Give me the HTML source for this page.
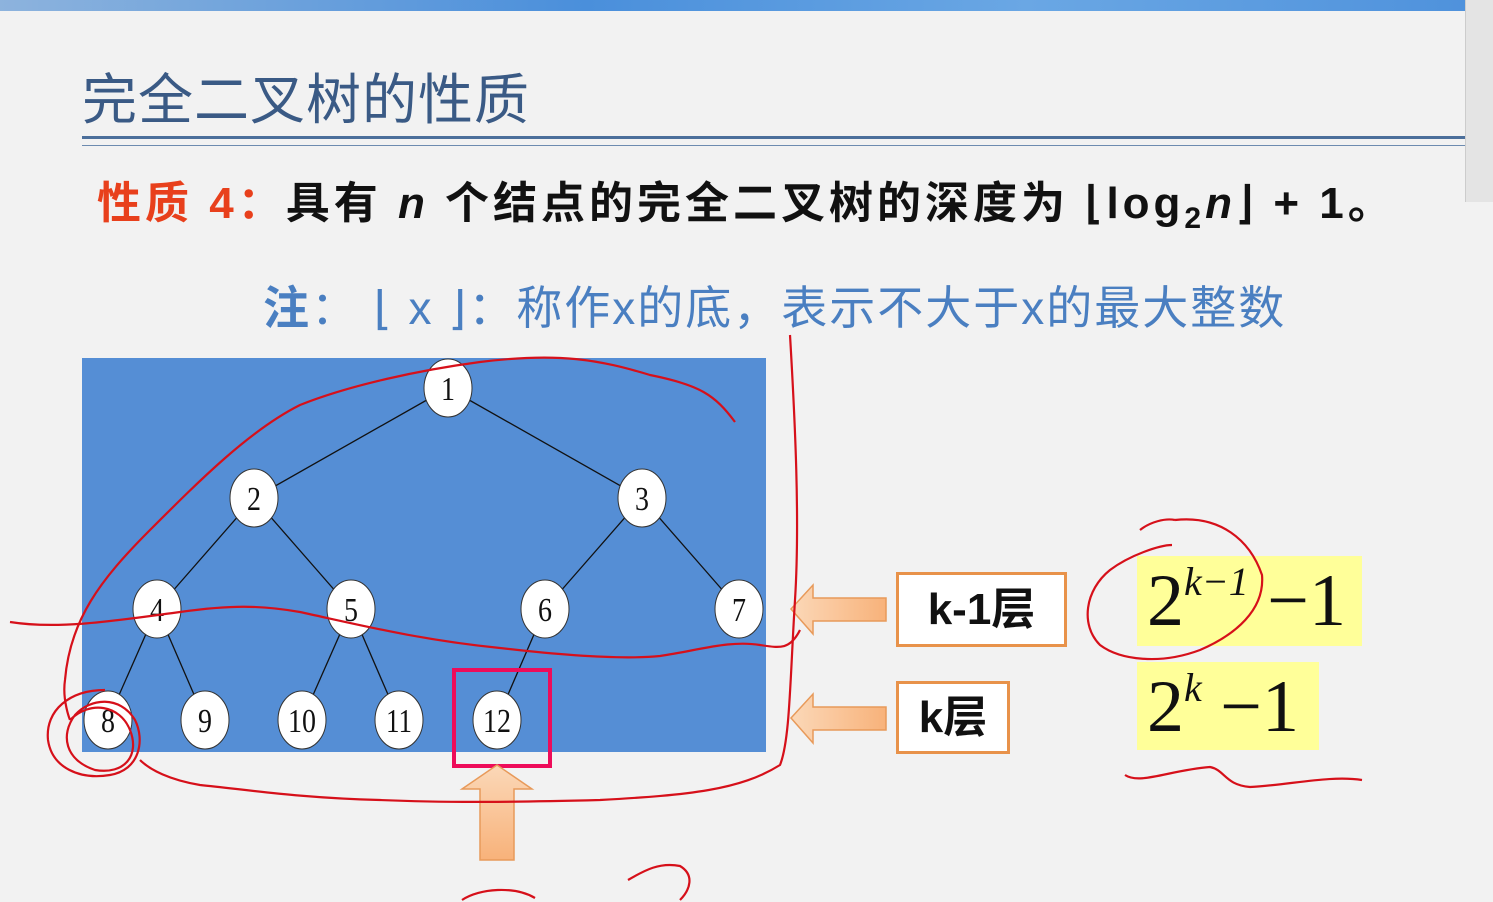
<!DOCTYPE html>
<html><head><meta charset="utf-8">
<style>
html,body{margin:0;padding:0;}
body{width:1493px;height:902px;overflow:hidden;background:#f2f2f2;position:relative;font-family:"Liberation Sans","Noto Sans CJK SC",sans-serif;}
.bar{position:absolute;left:0;top:0;width:1465px;height:11px;background:linear-gradient(90deg,#8db3dd,#4a8fdb 40%,#6aa7e4 70%,#4f92dc);}
.side{position:absolute;left:1465px;top:0;width:28px;height:202px;background:#e4e4e4;border-left:1px solid #ccc;}
.title{position:absolute;left:82px;top:60px;font-size:55px;color:#3a5a85;font-family:"Noto Sans CJK SC",sans-serif;font-weight:400;letter-spacing:1px;line-height:70px;}
.l1{position:absolute;left:82px;top:136px;width:1383px;height:3px;background:#4c6f9b;}
.l2{position:absolute;left:82px;top:145px;width:1383px;height:1px;background:#6d8bb0;}
.prop{position:absolute;left:97px;top:172px;font-size:44px;font-weight:bold;color:#111;white-space:nowrap;line-height:64px;letter-spacing:4px;font-family:"Liberation Sans","Noto Sans CJK SC",sans-serif;}
.prop .r{color:#e8401c;}
.note{position:absolute;left:263px;top:278px;font-size:46px;color:#4a7fc1;white-space:nowrap;line-height:60px;letter-spacing:2px;font-family:"Liberation Sans","Noto Sans CJK SC",sans-serif;}
.box{position:absolute;background:#fff;border:3px solid #e8924a;font-weight:bold;font-size:44px;color:#111;box-sizing:border-box;text-align:center;font-family:"Liberation Sans","Noto Sans CJK SC",sans-serif;}
.y{position:absolute;background:#ffff99;font-family:"Liberation Serif",serif;color:#111;font-size:74px;line-height:90px;white-space:nowrap;}
.y sup{font-size:40px;font-style:italic;vertical-align:0;position:relative;top:-30px;}
</style></head><body>
<div class="bar"></div>
<div class="side"></div>
<div class="title">完全二叉树的性质</div>
<div class="l1"></div><div class="l2"></div>
<div class="prop"><span class="r">性质 4：</span>具有 <i>n</i> 个结点的完全二叉树的深度为 ⌊log<sub style="font-size:30px">2</sub><i>n</i>⌋ + 1。</div>
<div class="note"><b>注</b>：&nbsp;⌊&nbsp;x&nbsp;⌋：称作x的底，表示不大于x的最大整数</div>
<div class="box" style="left:896px;top:572px;width:171px;height:75px;line-height:69px;">k-1层</div>
<div class="box" style="left:896px;top:681px;width:114px;height:73px;line-height:67px;">k层</div>
<div class="y" style="left:1137px;top:556px;width:225px;height:90px;padding-left:10px;box-sizing:border-box;">2<sup>k−1</sup> −1</div>
<div class="y" style="left:1137px;top:662px;width:182px;height:88px;padding-left:10px;box-sizing:border-box;">2<sup>k</sup> −1</div>
<svg style="position:absolute;left:0;top:0" width="1493" height="902">
<rect x="82" y="358" width="684" height="394" fill="#558ed5"/>
<g stroke="#111" stroke-width="1.3">
<line x1="448" y1="388" x2="254" y2="498"/><line x1="448" y1="388" x2="642" y2="498"/>
<line x1="254" y1="498" x2="157" y2="609"/><line x1="254" y1="498" x2="351" y2="609"/>
<line x1="642" y1="498" x2="545" y2="609"/><line x1="642" y1="498" x2="739" y2="609"/>
<line x1="157" y1="609" x2="108" y2="720"/><line x1="157" y1="609" x2="205" y2="720"/>
<line x1="351" y1="609" x2="302" y2="720"/><line x1="351" y1="609" x2="399" y2="720"/>
<line x1="545" y1="609" x2="497" y2="720"/>
</g>
<g fill="#fff" stroke="#333" stroke-width="1">
<ellipse cx="448" cy="388" rx="24" ry="29"/><ellipse cx="254" cy="498" rx="24" ry="29"/><ellipse cx="642" cy="498" rx="24" ry="29"/>
<ellipse cx="157" cy="609" rx="24" ry="29"/><ellipse cx="351" cy="609" rx="24" ry="29"/><ellipse cx="545" cy="609" rx="24" ry="29"/><ellipse cx="739" cy="609" rx="24" ry="29"/>
<ellipse cx="108" cy="720" rx="24" ry="29"/><ellipse cx="205" cy="720" rx="24" ry="29"/><ellipse cx="302" cy="720" rx="24" ry="29"/><ellipse cx="399" cy="720" rx="24" ry="29"/><ellipse cx="497" cy="720" rx="24" ry="29"/>
</g>
<g font-family="Liberation Serif,serif" font-size="34" text-anchor="middle" fill="#111">
<text x="448" y="400" textLength="14" lengthAdjust="spacingAndGlyphs">1</text><text x="254" y="510" textLength="14" lengthAdjust="spacingAndGlyphs">2</text><text x="642" y="510" textLength="14" lengthAdjust="spacingAndGlyphs">3</text>
<text x="157" y="621" textLength="14" lengthAdjust="spacingAndGlyphs">4</text><text x="351" y="621" textLength="14" lengthAdjust="spacingAndGlyphs">5</text><text x="545" y="621" textLength="14" lengthAdjust="spacingAndGlyphs">6</text><text x="739" y="621" textLength="14" lengthAdjust="spacingAndGlyphs">7</text>
<text x="108" y="732" textLength="14" lengthAdjust="spacingAndGlyphs">8</text><text x="205" y="732" textLength="14" lengthAdjust="spacingAndGlyphs">9</text><text x="302" y="732" textLength="28" lengthAdjust="spacingAndGlyphs">10</text><text x="399" y="732" textLength="26" lengthAdjust="spacingAndGlyphs">11</text><text x="497" y="732" textLength="28" lengthAdjust="spacingAndGlyphs">12</text>
</g>
<rect x="454" y="670" width="96" height="96" fill="none" stroke="#ee0c5a" stroke-width="4"/>
<defs><linearGradient id="g" x1="0" y1="0" x2="0" y2="1"><stop offset="0" stop-color="#fbd8b8"/><stop offset="1" stop-color="#f8b27a"/></linearGradient>
<linearGradient id="h" x1="0" y1="0" x2="1" y2="0"><stop offset="0" stop-color="#fbd8b8"/><stop offset="1" stop-color="#f8b27a"/></linearGradient></defs>
<polygon points="497,765 532,789 514,789 514,860 480,860 480,789 462,789" fill="url(#g)" stroke="#e89a5a" stroke-width="1.5"/>
<polygon points="791,609 813,585 813,598 886,598 886,621 813,621 813,634" fill="url(#h)" stroke="#e89a5a" stroke-width="1.5"/>
<polygon points="791,718 813,694 813,707 886,707 886,730 813,730 813,743" fill="url(#h)" stroke="#e89a5a" stroke-width="1.5"/>
<g fill="none" stroke="#d6101a" stroke-width="2.2" stroke-linejoin="round">
<path d="M735,422 C715,395 700,385 650,375 C600,360 560,352 480,362 C420,370 350,385 300,405 C250,430 200,480 150,530 C100,580 70,620 65,680 C62,700 70,720 70,720"/>
<path d="M10,622 C60,630 120,620 180,612 C230,605 260,605 300,612 C360,625 420,640 500,648 C560,655 620,660 660,656 C700,650 730,640 760,645 C780,648 790,650 800,630"/>
<path d="M790,335 C795,420 800,520 795,600 C790,680 790,740 780,765 C740,790 690,795 600,800 C520,802 450,803 380,800 C300,798 250,790 200,785 C170,780 150,770 140,760"/>
<path d="M105,690 C70,690 45,710 48,740 C52,768 80,780 110,775 C140,770 145,740 135,720 C120,695 90,698 75,715 C60,735 65,760 95,770 C125,775 140,755 130,730 C120,705 90,700 70,720"/>
<path d="M1175,520 C1220,515 1250,540 1262,575 C1265,610 1235,635 1200,650 C1160,665 1120,660 1100,645 C1080,625 1085,590 1110,570 C1130,555 1160,545 1172,545"/>
<path d="M1140,530 C1150,522 1165,518 1175,520"/>
<path d="M1125,775 C1140,785 1170,770 1210,767 C1225,770 1225,785 1250,787 C1290,785 1330,775 1362,780"/>
<path d="M628,880 C645,870 660,862 680,866 C695,875 690,890 680,900"/>
<path d="M462,900 C480,888 515,886 535,898"/>
</g>
</svg>
</body></html>
